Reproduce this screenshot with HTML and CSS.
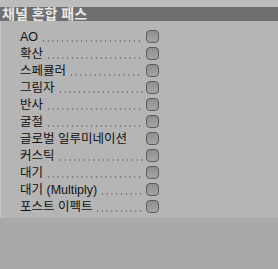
FILE: index.html
```html
<!DOCTYPE html>
<html lang="ko">
<head>
<meta charset="utf-8">
<link rel="stylesheet" href="styles.css">
</head>
<body>
<div class="top"></div>
<div class="titlebar">채널 혼합 패스</div>
<div class="panel">
  <div class="row"><span class="label">AO</span><span class="leader"></span><span class="check"></span></div>
  <div class="row"><span class="label">확산</span><span class="leader"></span><span class="check"></span></div>
  <div class="row"><span class="label">스페큘러</span><span class="leader"></span><span class="check"></span></div>
  <div class="row"><span class="label">그림자</span><span class="leader"></span><span class="check"></span></div>
  <div class="row"><span class="label">반사</span><span class="leader"></span><span class="check"></span></div>
  <div class="row"><span class="label">굴절</span><span class="leader"></span><span class="check"></span></div>
  <div class="row"><span class="label">글로벌 일루미네이션</span><span class="leader none"></span><span class="check"></span></div>
  <div class="row"><span class="label">커스틱</span><span class="leader"></span><span class="check"></span></div>
  <div class="row"><span class="label">대기</span><span class="leader"></span><span class="check"></span></div>
  <div class="row"><span class="label">대기 (Multiply)</span><span class="leader"></span><span class="check"></span></div>
  <div class="row"><span class="label">포스트 이펙트</span><span class="leader"></span><span class="check"></span></div>
</div>
</body>
</html>
```

FILE: styles.css
```css
html, body {
  margin: 0;
  padding: 0;
}
body {
  width: 278px;
  height: 269px;
  background: #a9a9a9;
  font-family: "Liberation Sans", "Noto Sans CJK KR", sans-serif;
  overflow: hidden;
}
.top {
  height: 7px;
  background: #bcbcbc;
}
.titlebar {
  height: 14px;
  line-height: 14px;
  background: #6f6f6f;
  color: #e8e8e8;
  font-size: 14px;
  font-weight: bold;
  padding-left: 2px;
  white-space: nowrap;
}
.panel {
  height: 190px;
  padding-top: 7px;
  background: #b5b5b5;
  border-left: 1px solid #c4c4c4;
}
.row {
  display: flex;
  align-items: center;
  height: 17px;
  width: 139px;
  padding-left: 19px;
}
.label {
  display: block;
  font-size: 12.5px;
  line-height: 14px;
  color: #111111;
  white-space: nowrap;
}
.leader {
  flex: 1;
  align-self: stretch;
  margin: 0 3px 0 2px;
  background-image: radial-gradient(circle, #707070 0.7px, transparent 0.9px);
  background-size: 4.8px 2px;
  background-repeat: repeat-x;
  background-position: 1px 12px;
}
.leader.none {
  background: none;
}
.check {
  width: 11px;
  height: 11px;
  border: 1px solid #5a5a5a;
  border-radius: 4px;
  background: linear-gradient(#8f8f8f, #a5a5a5);
  flex: none;
}
```
